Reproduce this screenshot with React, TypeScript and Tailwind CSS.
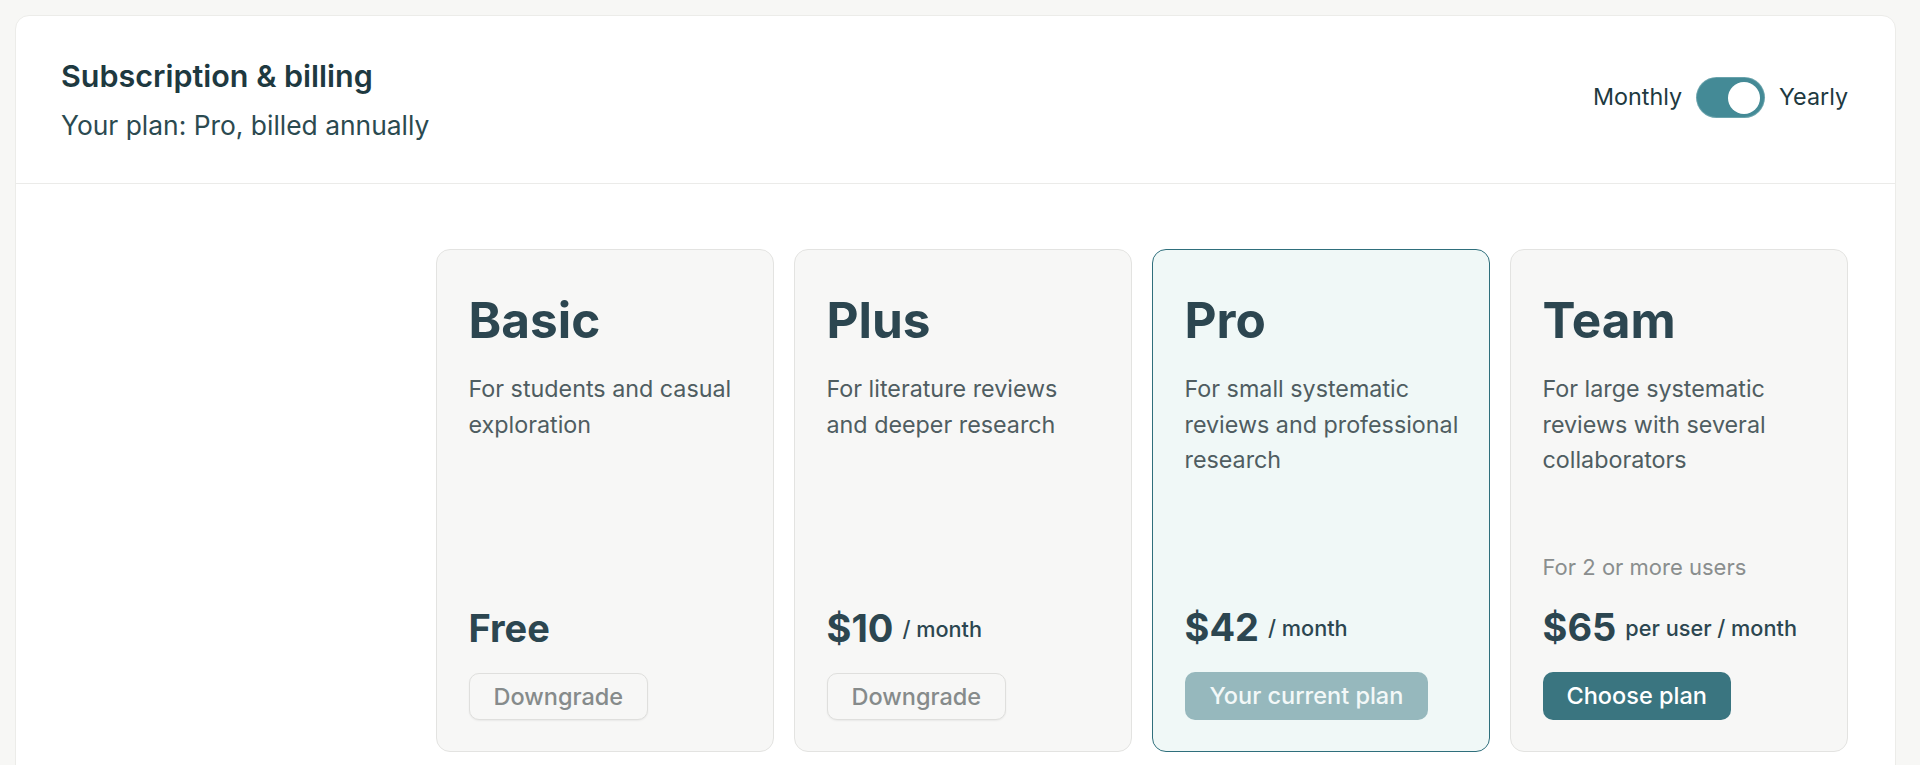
import React from 'react';

type Plan = {
  name: string;
  description: string;
  note?: string;
  price: string;
  unit?: string;
  action: 'downgrade' | 'current' | 'choose';
  label: string;
  highlighted?: boolean;
};

const plans: Plan[] = [
  {
    name: 'Basic',
    description: 'For students and casual exploration',
    price: 'Free',
    action: 'downgrade',
    label: 'Downgrade',
  },
  {
    name: 'Plus',
    description: 'For literature reviews and deeper research',
    price: '$10',
    unit: '/ month',
    action: 'downgrade',
    label: 'Downgrade',
  },
  {
    name: 'Pro',
    description: 'For small systematic reviews and professional research',
    price: '$42',
    unit: '/ month',
    action: 'current',
    label: 'Your current plan',
    highlighted: true,
  },
  {
    name: 'Team',
    description: 'For large systematic reviews with several collaborators',
    note: 'For 2 or more users',
    price: '$65',
    unit: 'per user / month',
    action: 'choose',
    label: 'Choose plan',
  },
];

const PlanButton = ({ plan }: { plan: Plan }) => {
  if (plan.action === 'downgrade') {
    return (
      <button className="mt-[22px] h-[47px] self-start rounded-[10px] border-[1.5px] border-[#dfdfdd] bg-[#f7f7f6] px-[24px] text-[23.5px] font-medium text-[#868b8b] shadow-[0_1px_2px_rgba(0,0,0,0.06)]">
        {plan.label}
      </button>
    );
  }
  if (plan.action === 'current') {
    return (
      <button className="mt-[22px] h-[48px] self-start rounded-[10px] bg-[#96b8bd] px-[25px] text-[23.5px] font-medium text-[#f3f8f8]">
        {plan.label}
      </button>
    );
  }
  return (
    <button className="mt-[22px] h-[48px] self-start rounded-[10px] bg-[#3a7580] px-[24px] text-[23.5px] font-medium text-white">
      {plan.label}
    </button>
  );
};

const PlanCard = ({ plan }: { plan: Plan }) => (
  <div
    className={
      plan.highlighted
        ? 'flex h-[503px] w-[338.5px] flex-col rounded-[14px] border-[1.5px] border-[#2f6f7c] bg-[#f0f8f7] pb-[31px] pl-[32px] pr-[26px] pt-[41px]'
        : 'flex h-[503px] w-[338.5px] flex-col rounded-[14px] border-[1.5px] border-[#e3e3e1] bg-[#f7f7f6] pb-[31px] pl-[32px] pr-[26px] pt-[41px]'
    }
  >
    <h3 className="text-[49.5px] font-bold leading-[58px] text-[#2c4650]">{plan.name}</h3>
    <p className="mt-[22px] text-[23.3px] leading-[35.5px] text-[#4f5d61]">{plan.description}</p>
    <div className="flex-1" />
    {plan.note && <p className="text-[22px] leading-[30px] text-[#8a8e8e]">{plan.note}</p>}
    <div className={plan.note ? 'mt-[22px] flex items-center gap-[9px]' : 'flex items-center gap-[9px]'}>
      <span className="text-[38px] font-bold leading-[46px] text-[#2c4650]">{plan.price}</span>
      {plan.unit && <span className="pt-[2px] text-[21.7px] font-medium text-[#2c4650]">{plan.unit}</span>}
    </div>
    <PlanButton plan={plan} />
  </div>
);

export default function App() {
  return (
    <div
      className="min-h-screen bg-[#f7f7f5] pl-[15px] pr-[24px] pt-[15px]"
      style={{ fontFamily: 'Inter, "Noto Sans", sans-serif' }}
    >
      <div className="overflow-hidden rounded-t-[14px] border border-[#ecece9] bg-white pb-[48px]">
        <header className="flex items-start justify-between border-b border-[#ebebe9] pb-[38px] pl-[45px] pr-[47px] pt-[42px]">
          <div>
            <h1 className="text-[30.5px] font-semibold leading-[35px] text-[#1e3940]">Subscription &amp; billing</h1>
            <p className="mt-[13px] text-[26.4px] leading-[39px] text-[#2b4a50]">Your plan: Pro, billed annually</p>
          </div>
          <div className="mt-[20px] flex items-center gap-[15px] text-[23.3px] text-[#20393f]">
            <span>Monthly</span>
            <div className="flex h-[39px] w-[67px] items-center justify-end rounded-full bg-[#448a96] px-[4px] ring-1 ring-[#6aa3ac]">
              <div className="h-[32px] w-[32px] rounded-full bg-white" />
            </div>
            <span>Yearly</span>
          </div>
        </header>
        <section className="flex justify-end gap-[19.5px] px-[47px] pt-[65px]">
          {plans.map((plan) => (
            <PlanCard key={plan.name} plan={plan} />
          ))}
        </section>
      </div>
    </div>
  );
}
